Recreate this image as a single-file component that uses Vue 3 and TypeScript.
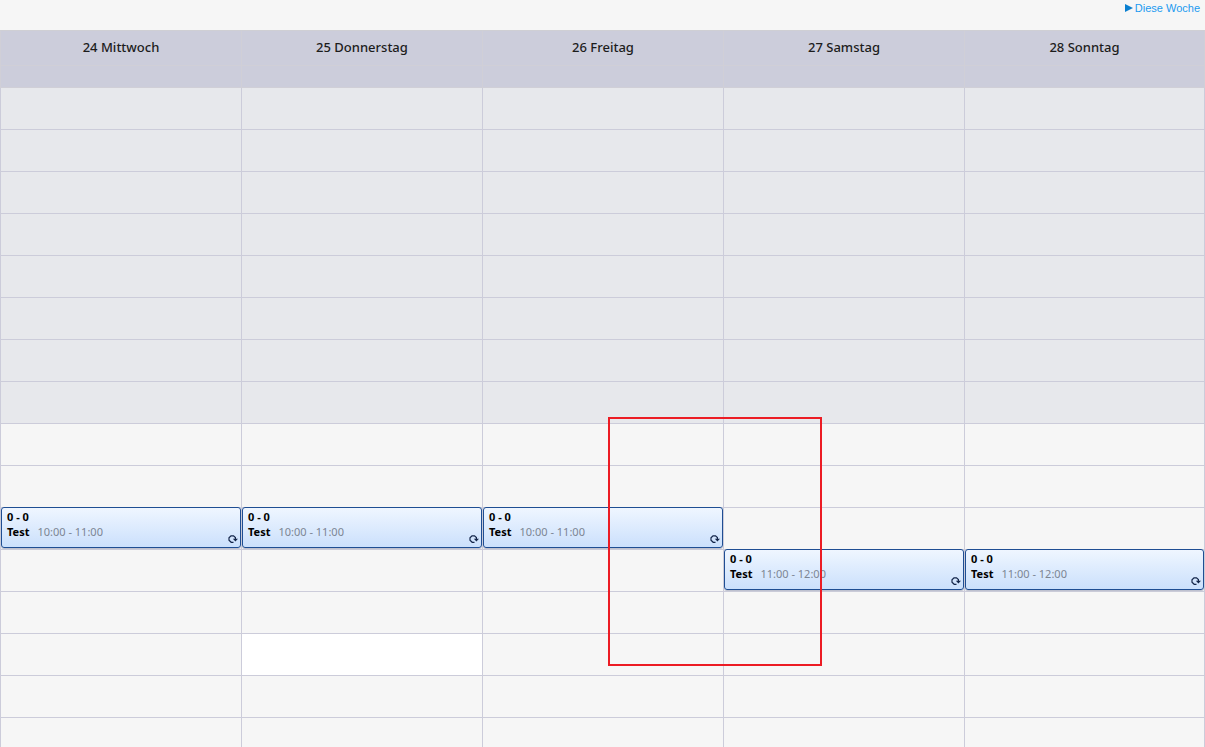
<script setup lang="ts">
interface CalendarEvent {
  title: string
  label: string
  time: string
}

interface Day {
  name: string
  eventRow: number
  event: CalendarEvent
}

const morning: CalendarEvent = { title: '0 - 0', label: 'Test', time: '10:00 - 11:00' }
const late: CalendarEvent = { title: '0 - 0', label: 'Test', time: '11:00 - 12:00' }

const days: Day[] = [
  { name: '24 Mittwoch', eventRow: 10, event: morning },
  { name: '25 Donnerstag', eventRow: 10, event: morning },
  { name: '26 Freitag', eventRow: 10, event: morning },
  { name: '27 Samstag', eventRow: 11, event: late },
  { name: '28 Sonntag', eventRow: 11, event: late },
]

const rows = Array.from({ length: 16 }, (_, i) => i)
const firstWorkRow = 8
const selected = { row: 13, day: 1 }
</script>

<template>
  <main class="page">
    <nav class="toolbar">
      <a class="week-link" href="#">
        <svg class="arrow" viewBox="0 0 8 8" aria-hidden="true"><path d="M0 0 L8 4 L0 8 Z" fill="#0a7fd0" /></svg>
        <span>Diese Woche</span>
      </a>
    </nav>

    <table class="calendar">
      <thead>
        <tr class="names">
          <th v-for="day in days" :key="day.name" scope="col">{{ day.name }}</th>
        </tr>
        <tr class="all-day">
          <td v-for="day in days" :key="day.name"></td>
        </tr>
      </thead>
      <tbody>
        <tr v-for="row in rows" :key="row" :class="{ off: row < firstWorkRow }">
          <td
            v-for="(day, d) in days"
            :key="day.name"
            :class="{ selected: row === selected.row && d === selected.day }"
          >
            <article v-if="day.eventRow === row" class="event">
              <strong class="title">{{ day.event.title }}</strong>
              <div class="detail">
                <strong>{{ day.event.label }}</strong>
                <span class="time">{{ day.event.time }}</span>
              </div>
              <svg class="recur" viewBox="0 0 10 8" aria-hidden="true">
                <path d="M5.5 7.3 H3.2 L1 5.3 V2.8 L3 0.8 H5.5 L7.4 2.6 V4.5" fill="none" stroke="#14264a" stroke-width="1.2" />
                <path d="M4.8 3.7 H10 L7.4 6.4 Z" fill="#14264a" />
              </svg>
            </article>
          </td>
        </tr>
      </tbody>
    </table>

    <div class="marker"></div>
  </main>
</template>

<style>
body {
  margin: 0;
  background: #f6f6f6;
}
</style>

<style scoped>
.page {
  position: relative;
  height: 100vh;
  overflow: hidden;
  background: #f6f6f6;
  color: #000;
  font-family: "Noto Sans", "Open Sans", sans-serif;
}

.toolbar {
  display: flex;
  justify-content: flex-end;
  box-sizing: border-box;
  height: 30px;
  padding: 0 5px;
}

.week-link {
  display: flex;
  align-items: center;
  gap: 2px;
  height: 16px;
  color: #1b9af0;
  font: 11px/16px "Liberation Sans", sans-serif;
  text-decoration: none;
}

.arrow {
  width: 8px;
  height: 8px;
}

.calendar {
  width: 100%;
  table-layout: fixed;
  border-collapse: separate;
  border-spacing: 0;
}

th,
td {
  box-sizing: border-box;
  padding: 0;
  border: 0 solid #ccccda;
  border-width: 0 0 1px 1px;
}

th:last-child,
td:last-child {
  border-right-width: 1px;
}

thead th,
thead td {
  background: #cccddb;
  border-color: #d0cfd7;
}

.names th {
  height: 36px;
  padding-bottom: 2px;
  border-top: 1px solid #cfcfd4;
  color: #1c1c1c;
  font-size: 13px;
  line-height: 18px;
  font-weight: 500;
}

.all-day td {
  height: 22px;
}

tbody td {
  position: relative;
  height: 42px;
}

.off td {
  background: #e7e8ec;
}

tbody .selected {
  background: #fff;
}

.event {
  position: absolute;
  inset: -1px 0 1px 0;
  box-sizing: border-box;
  padding: 1px 5px;
  border: 1px solid #1f4e93;
  border-radius: 3px;
  background: linear-gradient(#eff6ff, #cbe0fc);
  box-shadow: 0 1px 1px #b9bccb;
  font-size: 11px;
  line-height: 15px;
}

.title {
  display: block;
}

.detail {
  display: flex;
  gap: 8px;
}

.time {
  color: #7c8593;
}

.recur {
  position: absolute;
  right: 2px;
  bottom: 4px;
  width: 10px;
  height: 8px;
}

.marker {
  position: absolute;
  top: 417px;
  left: 608px;
  box-sizing: border-box;
  width: 214px;
  height: 249px;
  border: 2px solid #ec1c24;
}
</style>
